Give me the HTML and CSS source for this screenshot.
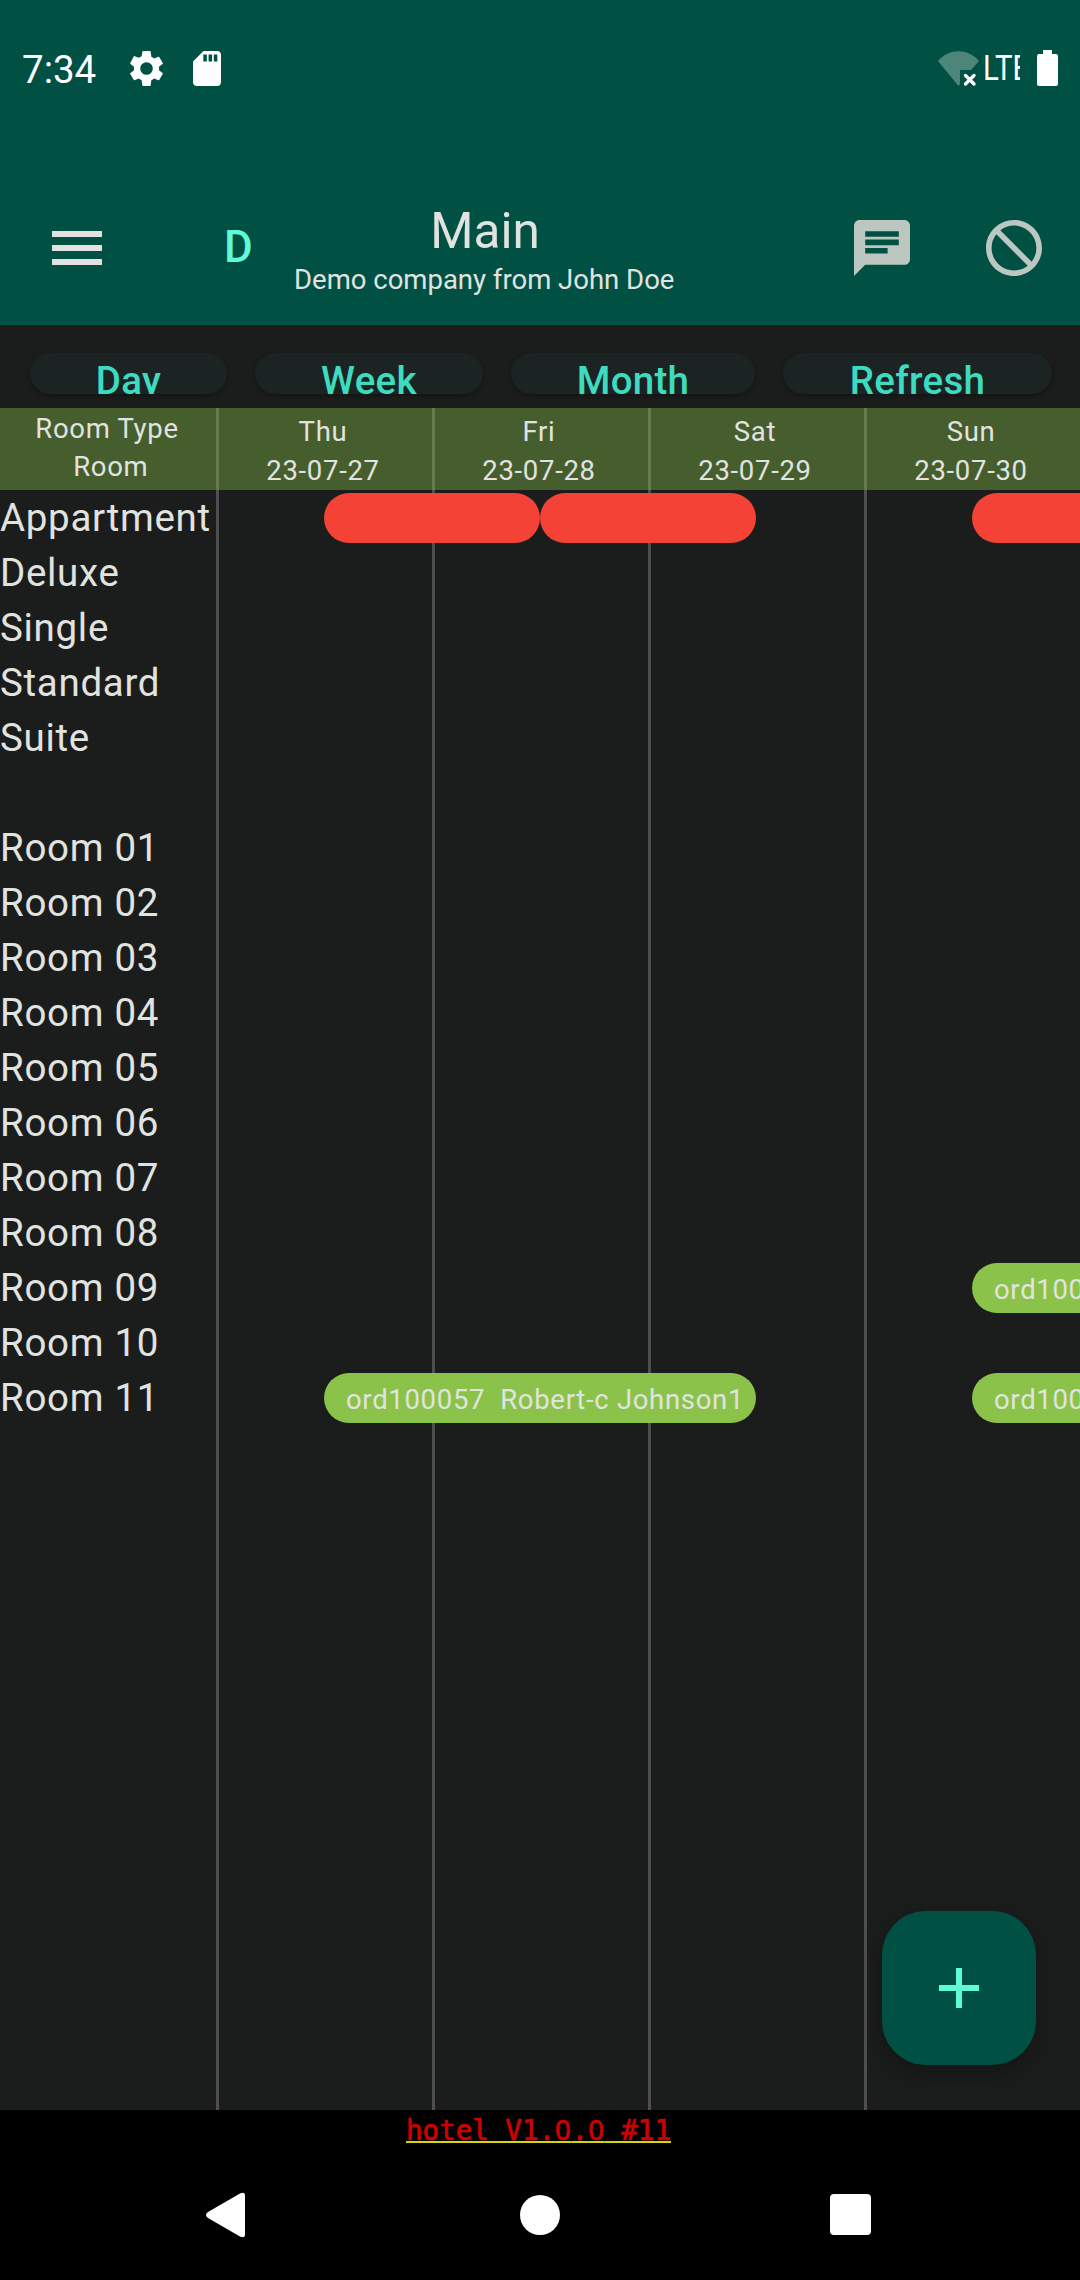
FILE: index.html
```
<!DOCTYPE html>
<html lang="en">
<head>
<meta charset="utf-8">
<title>Main</title>
<link rel="stylesheet" href="styles.css">
</head>
<body>
<div class="screen">
  <header class="top">
    <div class="status">
      <span class="clock">7:34</span>
      <svg class="gear" viewBox="2 2 20 20"><path d="M19.14 12.94c.04-.3.06-.61.06-.94 0-.32-.02-.64-.07-.94l2.03-1.58a.49.49 0 0 0 .12-.61l-1.92-3.32a.49.49 0 0 0-.59-.22l-2.39.96c-.5-.38-1.03-.7-1.62-.94L14.4 2.41a.48.48 0 0 0-.48-.41h-3.84c-.24 0-.43.17-.47.41L9.25 4.950c-.59.24-1.130.57-1.620.94l-2.390-.96a.48.48 0 0 0-.59.22L2.740 8.870c-.12.21-.08.47.12.61l2.030 1.580c-.05.3-.09.63-.09.94s.02.64.07.94l-2.030 1.580a.49.49 0 0 0-.12.61l1.920 3.320c.12.22.37.29.59.22l2.390-.96c.5.38 1.030.7 1.620.94l.36 2.940c.05.24.24.41.48.41h3.840c.24 0 .44-.17.47-.41l.36-2.940c.59-.24 1.130-.56 1.620-.94l2.390.96c.22.08.47 0 .59-.22l1.920-3.320c.12-.22.07-.47-.12-.61l-2.010-1.580zM12 15.600A3.600 3.600 0 1 1 12 8.400a3.600 3.600 0 0 1 0 7.200z"/></svg>
      <svg class="sd" viewBox="4 2 16 20"><path fill-rule="evenodd" d="M18 2h-8L4 8v12c0 1.100.9 2 2 2h12c1.100 0 2-.9 2-2V4c0-1.100-.9-2-2-2zM9.900 4h2v4h-2zM12.900 4h2v4h-2zM15.900 4h2v4h-2z"/></svg>
      <span class="fill"></span>
      <svg class="wifi" viewBox="0 0 41 35"><path fill="#fff" fill-opacity=".3" d="M0 10C11-3 30-3 41 10L33 19H22V33L20.500 35Z"/><path d="M27.500 24.500l8.500 8.500M36 24.500L27.500 33" stroke="#fff" stroke-width="3.200" stroke-linecap="round"/></svg>
      <span class="lte"><span>LTE</span></span>
      <svg class="battery" viewBox="0 0 21 36"><path d="M6 0h9v4h4q2 0 2 2v28q0 2-2 2H2q-2 0-2-2V6q0-2 2-2h4z"/></svg>
    </div>
    <div class="appbar">
      <svg class="menu" viewBox="0 0 50 34"><path d="M0 0h50v6H0zM0 14h50v6H0zM0 28h50v6H0z"/></svg>
      <span class="initial">D</span>
      <div class="titles"><h1>Main</h1><p>Demo company from John Doe</p></div>
      <svg class="action chat" viewBox="2 2 20 20"><path d="M20 2H4c-1.100 0-1.990.9-1.990 2L2 22l4-4h14c1.100 0 2-.9 2-2V4c0-1.100-.9-2-2-2zM6 9h12v2H6V9zm8 5H6v-2h8v2zm4-6H6V6h12v2z"/></svg>
      <svg class="action" viewBox="2 2 20 20"><path d="M12 2C6.480 2 2 6.480 2 12s4.480 10 10 10 10-4.480 10-10S17.520 2 12 2zM4 12c0-4.420 3.580-8 8-8 1.850 0 3.550.63 4.900 1.690L5.690 16.900A7.902 7.902 0 0 1 4 12zm8 8c-1.850 0-3.550-.63-4.900-1.690L18.310 7.100A7.902 7.902 0 0 1 20 12c0 4.420-3.580 8-8 8z" transform="matrix(-1 0 0 1 24 0)"/></svg>
    </div>
  </header>
  <nav class="tabs">
    <button class="day">Day</button><button class="week">Week</button><button class="month">Month</button><button class="refresh">Refresh</button>
  </nav>
  <main class="board">
    <div class="rooms">
      <div class="corner"><span>Room Type</span><span>&nbsp;Room</span></div>
      <div>Appartment</div><div>Deluxe</div><div>Single</div><div>Standard</div><div>Suite</div><div></div>
      <div>Room 01</div><div>Room 02</div><div>Room 03</div><div>Room 04</div><div>Room 05</div><div>Room 06</div><div>Room 07</div><div>Room 08</div><div>Room 09</div><div>Room 10</div><div>Room 11</div>
    </div>
    <div class="col"><div class="date"><span>Thu</span><span>23-07-27</span></div></div>
    <div class="col"><div class="date"><span>Fri</span><span>23-07-28</span></div></div>
    <div class="col"><div class="date"><span>Sat</span><span>23-07-29</span></div></div>
    <div class="col"><div class="date"><span>Sun</span><span>23-07-30</span></div></div>
    <div class="bookings">
      <div class="bar red r1 thu"></div>
      <div class="bar red r1 fri"></div>
      <div class="bar red r1 sun"></div>
      <div class="bar green r15 sun">ord100058</div>
      <div class="bar green r17 thu two">ord100057&nbsp; Robert-c Johnson1</div>
      <div class="bar green r17 sun">ord100059</div>
    </div>
    <button class="fab" aria-label="Add"><svg viewBox="0 0 40 40"><path d="M17 0h6v17h17v6H23v17h-6V23H0v-6h17z"/></svg></button>
  </main>
  <div class="version"><span>hotel V1.<b>0</b>.<b>0</b> #11</span></div>
  <footer class="navbar">
    <svg viewBox="0 0 40 46"><path d="M2 20L34 1.500Q39-1 39 4V42Q39 47 34 44.500L2 26Q-2 23 2 20Z"/></svg>
    <svg viewBox="0 0 40 40"><circle cx="20" cy="20" r="20"/></svg>
    <svg viewBox="0 0 41 41"><rect width="41" height="41" rx="4"/></svg>
  </footer>
</div>
</body>
</html>
```
FILE: styles.css
```
* { box-sizing: border-box; }
body { margin: 0; background: #000; font-family: Roboto, "Liberation Sans", sans-serif; color: #e1e3e0; }
svg { display: block; flex: none; }
button { border: 0; padding: 0; font-family: inherit; }
.screen { width: 1080px; height: 2280px; display: flex; flex-direction: column; overflow: hidden; background: #1b1d1c; }

.top { height: 325px; background: #005143; flex: none; }
.status { height: 136px; padding: 0 22px; display: flex; align-items: center; fill: #fff; color: #fff; }
.clock { font-size: 38.500px; line-height: 46px; width: 107px; padding-top: 3px; }
.gear { width: 35px; height: 35px; }
.sd { width: 28px; height: 35px; margin-left: 29px; }
.fill { flex: 1; }
.wifi { width: 41px; height: 35px; }
.lte { width: 35px; margin: 0 17px 0 6px; overflow: hidden; font-size: 35px; line-height: 40px; padding-top: 1px; }
.lte span { display: inline-block; transform: scaleX(.84); transform-origin: left; margin-left: -2px; }
.battery { width: 21px; height: 36px; }

.appbar { height: 154px; margin-top: 35px; display: flex; align-items: center; padding: 0 38px 0 52px; fill: #e1e3e0; }
.menu { width: 50px; height: 34px; }
.initial { width: 192px; padding: 0 0 2px 122px; font-size: 44px; font-weight: 500; color: #5ffbd8; line-height: 52px; }
.titles { width: 380px; text-align: center; padding-top: 2px; }
h1 { margin: 0; padding-left: 2px; font-size: 49.500px; line-height: 58px; font-weight: 400; }
.titles p { margin: 4px 0 0; font-size: 27.500px; line-height: 32px; white-space: nowrap; }
.action { width: 56px; height: 56px; fill: #bdc7c1; margin-left: auto; }
.chat { margin-left: 180px; }

.tabs { height: 83px; padding: 28px 28px 0 30px; display: flex; justify-content: space-between; flex: none; }
.tabs button { height: 41px; border-radius: 21px; overflow: hidden; background: #1b2423; color: #3ddcc0; font-size: 38.500px; font-weight: 500; letter-spacing: .28px; box-shadow: 0 2px 4px rgba(0,0,0,.35); padding-top: 5px; line-height: 45px; display: flex; justify-content: center; align-items: flex-start; }
.day { width: 197px; } .week { width: 228px; } .month { width: 244px; } .refresh { width: 269px; }

.board { position: relative; flex: none; height: 1702px; display: flex; }
.rooms { width: 216px; flex: none; font-size: 38.500px; letter-spacing: .69px; }
.rooms > div { height: 55px; line-height: 55px; white-space: nowrap; }
.rooms > .corner, .date { height: 82px; background: #465e2d; font-size: 27.500px; letter-spacing: .69px; display: flex; flex-direction: column; align-items: center; }
.rooms > .corner { line-height: 38px; padding: 2px 2px 0 0; }
.col { width: 216px; flex: none; border-left: 3px solid #4e4f4e; }
.date { margin-left: -3px; border-left: 3px solid #667a50; line-height: 39px; padding-top: 4px; padding-right: 5px; }

.bookings { position: absolute; inset: 85px 0 0 216px; display: grid; grid-template-columns: repeat(8, 108px); grid-template-rows: repeat(17, 55px); overflow: hidden; }
.bar { height: 50px; border-radius: 25px; padding-left: 22px; font-size: 27.500px; line-height: 53px; letter-spacing: .69px; white-space: nowrap; }
.red { background: #f44336; } .green { background: #8bc34a; }
.r1 { grid-row: 1; } .r15 { grid-row: 15; } .r17 { grid-row: 17; }
.thu { grid-column: 2 / 4; } .thu.two { grid-column: 2 / 6; } .fri { grid-column: 4 / 6; } .sun { grid-column: 8 / 10; width: 216px; }

.fab { position: absolute; right: 44px; bottom: 45px; width: 154px; height: 154px; border-radius: 44px; background: #005143; display: grid; place-items: center; box-shadow: 0 8px 24px rgba(0,0,0,.3); fill: #5ffbd8; }
.fab svg { width: 40px; height: 40px; }

.version { height: 40px; background: #000; text-align: center; flex: none; padding-right: 3px; }
.version span { display: inline-block; font: 400 27.500px/32px "DejaVu Sans Mono", monospace; color: #d00000; -webkit-text-stroke: .7px #d00000; text-decoration: underline #d8d800 2px; text-decoration-skip-ink: none; margin-top: 4px; }
.version b { font-family: "Noto Sans", sans-serif; font-weight: 400; letter-spacing: .83px; line-height: 1; }
.navbar { height: 130px; background: #000; display: flex; align-items: center; justify-content: space-between; padding: 0 209px 1px 206px; fill: #fff; }
.navbar svg:nth-child(1) { width: 40px; height: 46px; }
.navbar svg:nth-child(2) { width: 40px; height: 40px; margin-left: 4px; }
.navbar svg:nth-child(3) { width: 41px; height: 41px; }
```
